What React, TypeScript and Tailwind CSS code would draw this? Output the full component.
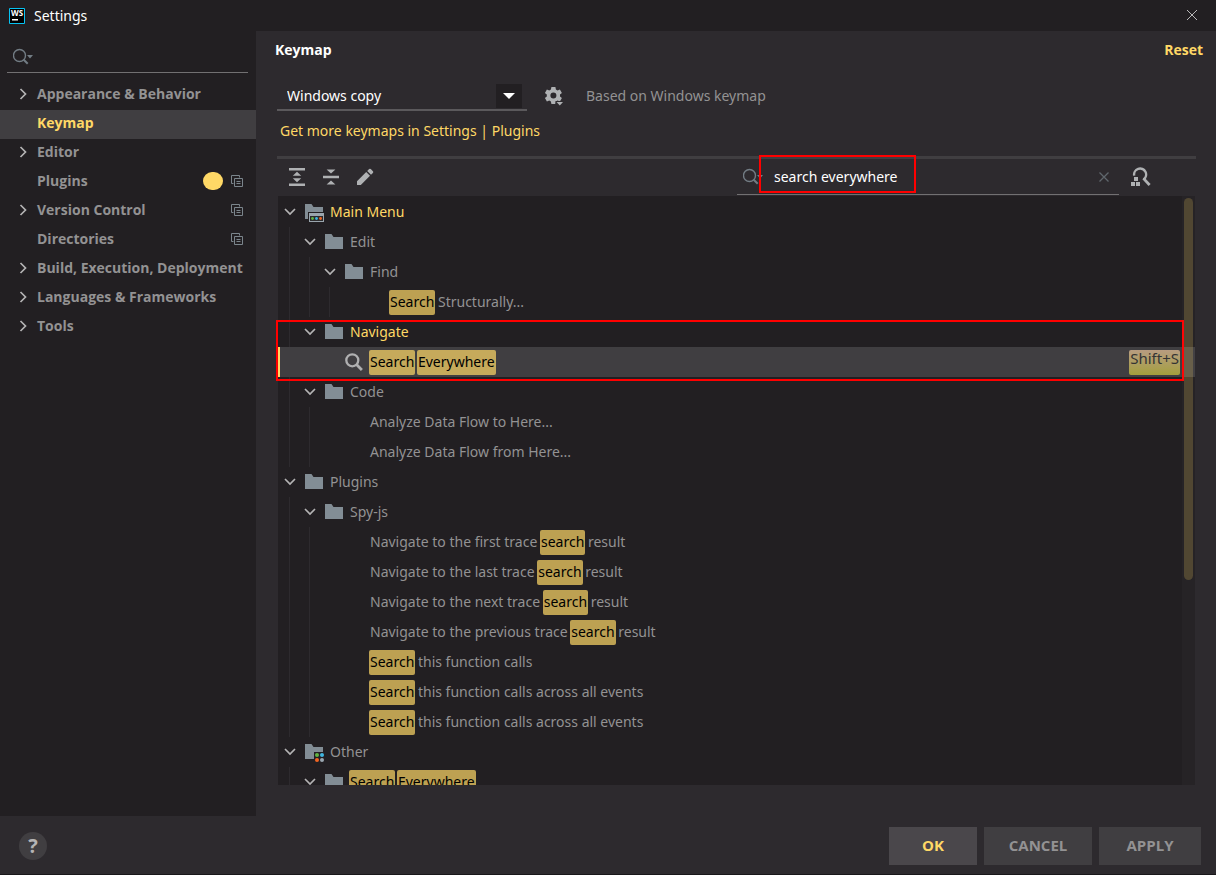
import { Fragment, useState } from "react";
import clsx from "clsx";

type NodeIcon = "folder" | "menu" | "other" | "search";

interface TreeNode {
  id: string;
  label: string;
  icon?: NodeIcon;
  modified?: boolean;
  selected?: boolean;
  marked?: boolean;
  shortcut?: string;
  children?: TreeNode[];
}

interface Page {
  name: string;
  expandable?: boolean;
  active?: boolean;
  badge?: boolean;
  project?: boolean;
}

const pages: Page[] = [
  { name: "Appearance & Behavior", expandable: true },
  { name: "Keymap", active: true },
  { name: "Editor", expandable: true },
  { name: "Plugins", badge: true, project: true },
  { name: "Version Control", expandable: true, project: true },
  { name: "Directories", project: true },
  { name: "Build, Execution, Deployment", expandable: true },
  { name: "Languages & Frameworks", expandable: true },
  { name: "Tools", expandable: true },
];

// words between square brackets are search hits
const tree: TreeNode[] = [
  {
    id: "main",
    label: "Main Menu",
    icon: "menu",
    modified: true,
    children: [
      {
        id: "edit",
        label: "Edit",
        icon: "folder",
        children: [
          {
            id: "find",
            label: "Find",
            icon: "folder",
            children: [{ id: "structurally", label: "[Search] Structurally..." }],
          },
        ],
      },
      {
        id: "navigate",
        label: "Navigate",
        icon: "folder",
        modified: true,
        marked: true,
        children: [
          {
            id: "everywhere",
            label: "[Search] [Everywhere]",
            icon: "search",
            selected: true,
            shortcut: "Shift+S",
          },
        ],
      },
      {
        id: "code",
        label: "Code",
        icon: "folder",
        children: [
          { id: "flow-to", label: "Analyze Data Flow to Here..." },
          { id: "flow-from", label: "Analyze Data Flow from Here..." },
        ],
      },
    ],
  },
  {
    id: "plugins",
    label: "Plugins",
    icon: "folder",
    children: [
      {
        id: "spy",
        label: "Spy-js",
        icon: "folder",
        children: [
          { id: "first", label: "Navigate to the first trace [search] result" },
          { id: "last", label: "Navigate to the last trace [search] result" },
          { id: "next", label: "Navigate to the next trace [search] result" },
          { id: "previous", label: "Navigate to the previous trace [search] result" },
          { id: "calls", label: "[Search] this function calls" },
          { id: "calls-all", label: "[Search] this function calls across all events" },
          { id: "calls-all-2", label: "[Search] this function calls across all events" },
        ],
      },
    ],
  },
  {
    id: "other",
    label: "Other",
    icon: "other",
    children: [{ id: "other-search", label: "[Search] [Everywhere]", icon: "folder", children: [] }],
  },
];

const Chevron = ({ down }: { down?: boolean }) => (
  <svg width="12" height="12" viewBox="0 0 12 12" fill="none" stroke="#b4b3b4" strokeWidth="1.7">
    <path d={down ? "M1 3 6 8 11 3" : "M3.5 1 8.5 6 3.5 11"} />
  </svg>
);

const SearchDrop = () => (
  <svg width="22" height="18" viewBox="0 0 22 18" fill="none" className="shrink-0">
    <circle cx="6.5" cy="7.5" r="6" stroke="#727c84" strokeWidth="1.4" />
    <path d="m10.7 11.7 4 4" stroke="#727c84" strokeWidth="2" />
    <path d="M14 7h6l-3 3.4z" fill="#727c84" />
  </svg>
);

const RowIcon = ({ icon }: { icon: NodeIcon }) => {
  if (icon === "search") {
    return (
      <svg width="20" height="20" viewBox="0 0 20 20" fill="none" stroke="#b0b0b1">
        <circle cx="8.3" cy="8.3" r="6" strokeWidth="2.3" />
        <path d="m12.5 12.5 5.4 5.4" strokeWidth="2.8" />
      </svg>
    );
  }
  return (
    <svg width="20" height="20" viewBox="0 0 20 20">
      {icon === "folder" && <path d="M1 2h6.5l2 3H19v12H1z" fill="#828d95" />}
      {icon === "menu" && (
        <>
          <path d="M1 2h6.5l2 3H19v5H4v7H1z" fill="#828d95" />
          <path d="M5 11h15v9H5z" fill="#9aa5ad" />
          <path d="M6 14h13v5H6z" fill="#2b2b2c" />
          <circle cx="8.5" cy="16.5" r="1.4" fill="#62b543" />
          <circle cx="12.5" cy="16.5" r="1.4" fill="#40b6e0" />
          <circle cx="16.5" cy="16.5" r="1.4" fill="#f26522" />
        </>
      )}
      {icon === "other" && (
        <>
          <path d="M1 2h6.5l2 3H19v5h-9v7H1z" fill="#828d95" />
          <circle cx="13" cy="13" r="2" fill="#62b543" />
          <circle cx="18" cy="13" r="2" fill="#40b6e0" />
          <circle cx="13" cy="18" r="2" fill="#f26522" />
          <circle cx="18" cy="18" r="2" fill="#9aa7b0" />
        </>
      )}
    </svg>
  );
};

const ProjectIcon = () => (
  <svg width="12" height="12" viewBox="0 0 12 12" fill="none" stroke="#7b858c">
    <path d="M2.5 8.5h-2v-8h8v2" />
    <path d="M3.5 3.5h8v8h-8zM5.5 6.5h4M5.5 8.5h4" />
  </svg>
);

const Label = ({ text }: { text: string }) => (
  <span className="mt-px flex h-[25px] leading-[23px] whitespace-pre">
    {text.split(/[[\]]/).map((part, i) =>
      i % 2 ? (
        <mark key={i} className="-mx-px rounded-xs bg-[#ffd866]/70 px-px text-black">
          {part}
        </mark>
      ) : (
        <Fragment key={i}>{part && <span>{part}</span>}</Fragment>
      )
    )}
  </span>
);

interface TreeItemProps {
  node: TreeNode;
  depth: number;
  closed: string[];
  onToggle: (id: string) => void;
}

const TreeItem = ({ node, depth, closed, onToggle }: TreeItemProps) => {
  const open = !closed.includes(node.id);

  return (
    <li className={clsx(node.marked && "relative")}>
      <div
        className={clsx(
          "flex h-[30px] items-center border-l-2",
          node.selected ? "border-[#ffd866] bg-[#403e41]" : "border-transparent",
          node.modified && "text-[#ffd866]"
        )}
      >
        {Array.from({ length: depth }, (_, i) => (
          <span key={i} className="flex h-full w-5 shrink-0 pl-[9px]">
            {!node.selected && <span className="w-px bg-[#2d2a2e]" />}
          </span>
        ))}
        <span className="flex w-5 shrink-0 justify-center">
          {node.children && (
            <button type="button" aria-label={`Toggle ${node.id}`} onClick={() => onToggle(node.id)}>
              <Chevron down={open} />
            </button>
          )}
        </span>
        <span className="flex w-[30px] shrink-0 justify-center pr-0.5">
          {node.icon && <RowIcon icon={node.icon} />}
        </span>
        <Label text={node.label} />
        {node.shortcut && (
          <kbd className="mr-[15px] ml-auto h-[25px] rounded-xs bg-linear-to-b from-[#b89c80] to-[#a49f3a] px-px font-['Noto_Sans',sans-serif] text-[15px] leading-4 text-[#343434]">
            {node.shortcut}
          </kbd>
        )}
      </div>
      {open && node.children && (
        <ul>
          {node.children.map((child) => (
            <TreeItem key={child.id} node={child} depth={depth + 1} closed={closed} onToggle={onToggle} />
          ))}
        </ul>
      )}
      {node.marked && (
        <div className="pointer-events-none absolute top-[3px] right-[11px] -bottom-1 -left-0.5 border-2 border-[#ff0000]" />
      )}
    </li>
  );
};

const Sidebar = () => (
  <aside className="w-64 shrink-0 bg-[#221f22]">
    <label className="mr-2 ml-[7px] flex h-[42px] items-center border-b border-[#727072] pt-2.5 pl-1.5">
      <SearchDrop />
      <input aria-label="Search settings" className="h-6 min-w-0 flex-1 text-white outline-none" />
    </label>
    <nav className="mt-2 font-['Open_Sans',sans-serif] font-bold">
      {pages.map((page) => (
        <a
          key={page.name}
          href="#"
          className={clsx(
            "flex h-[29px] items-center pr-[13px] pb-1 pl-[17px] whitespace-nowrap",
            page.active && "bg-[#403e41] text-[#ffd866]"
          )}
        >
          <span className="w-5 shrink-0">{page.expandable && <Chevron />}</span>
          {page.name}
          <span className="ml-auto flex items-center gap-2">
            {page.badge && <span className="h-[18px] w-5 rounded-full bg-[#ffd866]" />}
            {page.project && <ProjectIcon />}
          </span>
        </a>
      ))}
    </nav>
  </aside>
);

const Toolbar = () => {
  const [query, setQuery] = useState("search everywhere");

  return (
    <div className="flex h-[37px] items-center pb-px">
      <div className="flex gap-3.5 pl-2.5">
        <button type="button" aria-label="Expand all">
          <svg width="20" height="20" viewBox="0 0 20 20" fill="#afb1b3">
            <path d="M2 1h16v2.4H2zM2 16.6h16V19H2zM10 4.8l4.2 4H5.8zM10 15.2l4.2-4H5.8z" />
          </svg>
        </button>
        <button type="button" aria-label="Collapse all">
          <svg width="20" height="20" viewBox="0 0 20 20" fill="#afb1b3">
            <path d="M2 8.8h16v2.4H2zM10 6.6l4.4-4.2H5.6zM10 13.4l4.4 4.2H5.6z" />
          </svg>
        </button>
        <button type="button" aria-label="Edit shortcut">
          <svg width="20" height="20" viewBox="0 0 20 20" fill="#afb1b3">
            <path d="M2 14.2V18h3.8L15 8.8 11.2 5zM12.2 4 16 7.8l1.9-1.9a1.2 1.2 0 0 0 0-1.7l-2.1-2.1a1.2 1.2 0 0 0-1.7 0z" />
          </svg>
        </button>
      </div>
      <div className="relative ml-auto flex h-9 w-[382px] items-center border-b border-[#727072] pr-2 pl-1.5">
        <SearchDrop />
        <input
          aria-label="Search actions"
          value={query}
          onChange={(event) => setQuery(event.target.value)}
          className="ml-[9px] h-7 min-w-0 flex-1 text-white outline-none"
        />
        <button type="button" aria-label="Clear" onClick={() => setQuery("")}>
          <svg width="14" height="14" viewBox="0 0 14 14" stroke="#5f676d" strokeWidth="1.3">
            <path d="m2.5 2.5 9 9M11.5 2.5l-9 9" />
          </svg>
        </button>
        <div className="pointer-events-none absolute -top-1 left-[22px] h-[38px] w-[157px] border-2 border-[#ff0000]" />
      </div>
      <button type="button" aria-label="Find actions by shortcut" className="mr-[45px] ml-3">
        <svg width="20" height="20" viewBox="0 0 20 20" fill="#afb1b3">
          <path d="M3.2 8.6A6 6 0 1 1 12.6 12.4" fill="none" stroke="#afb1b3" strokeWidth="2.4" />
          <path d="m12.4 11.4 6.2 6.6" stroke="#afb1b3" strokeWidth="2.8" />
          <path d="M0 15h4v4H0zM5 15h4v4H5zM3 10h4v4H3z" />
        </svg>
      </button>
    </div>
  );
};

const KeymapPanel = () => {
  const [closed, setClosed] = useState<string[]>([]);

  const onToggle = (id: string) => {
    setClosed(closed.includes(id) ? closed.filter((item) => item !== id) : [...closed, id]);
  };

  return (
    <main className="flex min-w-0 flex-1 flex-col pr-5 pb-[31px] pl-[21px]">
      <div className="-mr-[7px] -ml-0.5 flex h-[38px] items-center justify-between font-['Open_Sans',sans-serif] font-bold">
        <h1 className="text-white">Keymap</h1>
        <button type="button" className="text-[#ffd866]">
          Reset
        </button>
      </div>

      <div className="mt-[13px] flex h-[29px] items-center">
        <div className="relative">
          <select
            aria-label="Keymap scheme"
            className="block h-[29px] w-[250px] appearance-none border-b-2 border-[#5b595c] pl-2.5 text-white outline-none"
          >
            <option>Windows copy</option>
          </select>
          <span className="pointer-events-none absolute top-0.5 right-[5px] flex h-6 w-[26px] items-center justify-center bg-[#221f22]">
            <svg width="12" height="6" viewBox="0 0 12 6" fill="#fff">
              <path d="M0 0h12L6 6z" />
            </svg>
          </span>
        </div>
        <div className="ml-4 flex items-center gap-[21px] pb-0.5">
          <button type="button" aria-label="Scheme actions">
            <svg width="22" height="22" viewBox="0 0 22 22" fill="#afb1b3">
              <path
                fillRule="evenodd"
                d="M8.4 2h4l.5 2.5 1.6.9 2.4-.9 2 3.4-1.9 1.7v1.8l1.9 1.7-2 3.4-2.4-.9-1.6.9-.5 2.5h-4l-.5-2.5-1.6-.9-2.4.9-2-3.4 1.9-1.7V9.6l-1.9-1.7 2-3.4 2.4.9 1.6-.9zM10.4 7.5a3 3 0 1 0 0 6 3 3 0 0 0 0-6z"
              />
              <path d="M12.5 16h8v5h-8z" fill="#2d2a2e" />
              <path d="M13.5 17H20l-3.2 3.5z" />
            </svg>
          </button>
          <span>Based on Windows keymap</span>
        </div>
      </div>

      <div className="flex h-[41px] items-center pb-0.5 pl-[3px]">
        <a href="#" className="text-[#ffd866]">
          Get more keymaps in Settings | Plugins
        </a>
      </div>

      <div className="mt-1 h-[3px] shrink-0 bg-[#403e41]" />
      <Toolbar />

      <div className="relative mx-px min-h-0 flex-1 bg-[#221f22]">
        <div className="-ml-0.5 h-full overflow-y-auto pt-px pl-0.5 [scrollbar-width:none]">
          <ul>
            {tree.map((node) => (
              <TreeItem key={node.id} node={node} depth={0} closed={closed} onToggle={onToggle} />
            ))}
          </ul>
        </div>
        <div className="pointer-events-none absolute inset-y-0 right-0 w-[13px] bg-white/2 px-0.5 pt-0.5">
          <div className="h-[65%] rounded-full bg-[#ffd866]/20" />
        </div>
      </div>
    </main>
  );
};

export default function App() {
  return (
    <div className="flex h-screen flex-col border-b border-[#19171a] bg-[#2d2a2e] font-['Noto_Sans',sans-serif] text-sm text-[#939293]">
      <header className="flex h-[31px] shrink-0 items-center bg-[#221f22] pt-px pr-[18px] pl-2 text-white">
        <svg width="18" height="18" viewBox="0 0 18 18">
          <path d="M1.5 1.5h15v15h-15z" fill="#000" stroke="#07c3f2" />
          <text x="9" y="9" fontSize="8" fontWeight="700" textAnchor="middle" fill="#fff">
            WS
          </text>
          <path d="M4 12h6v1.5H4z" fill="#fff" />
        </svg>
        <span className="ml-2">Settings</span>
        <button type="button" aria-label="Close" className="ml-auto pb-0.5">
          <svg width="12" height="12" viewBox="0 0 12 12" stroke="#b9b8b9">
            <path d="m1 1 10 10M11 1 1 11" />
          </svg>
        </button>
      </header>

      <div className="flex min-h-0 flex-1">
        <Sidebar />
        <KeymapPanel />
      </div>

      <footer className="flex h-[58px] shrink-0 items-center gap-[7px] pt-0.5 pr-[15px] pl-[19px] font-['Open_Sans',sans-serif] text-[15px] font-bold">
        <button
          type="button"
          aria-label="Help"
          className="mr-auto size-7 rounded-full bg-[#403e41] text-xl leading-7 text-[#b4b3b4]"
        >
          ?
        </button>
        <button type="button" className="h-[38px] w-[88px] bg-[#4a474b] text-[#ffd866]">
          OK
        </button>
        <button type="button" className="h-[38px] w-[108px] bg-[#403e41]">
          CANCEL
        </button>
        <button type="button" className="h-[38px] w-[102px] bg-[#403e41]">
          APPLY
        </button>
      </footer>
    </div>
  );
}
